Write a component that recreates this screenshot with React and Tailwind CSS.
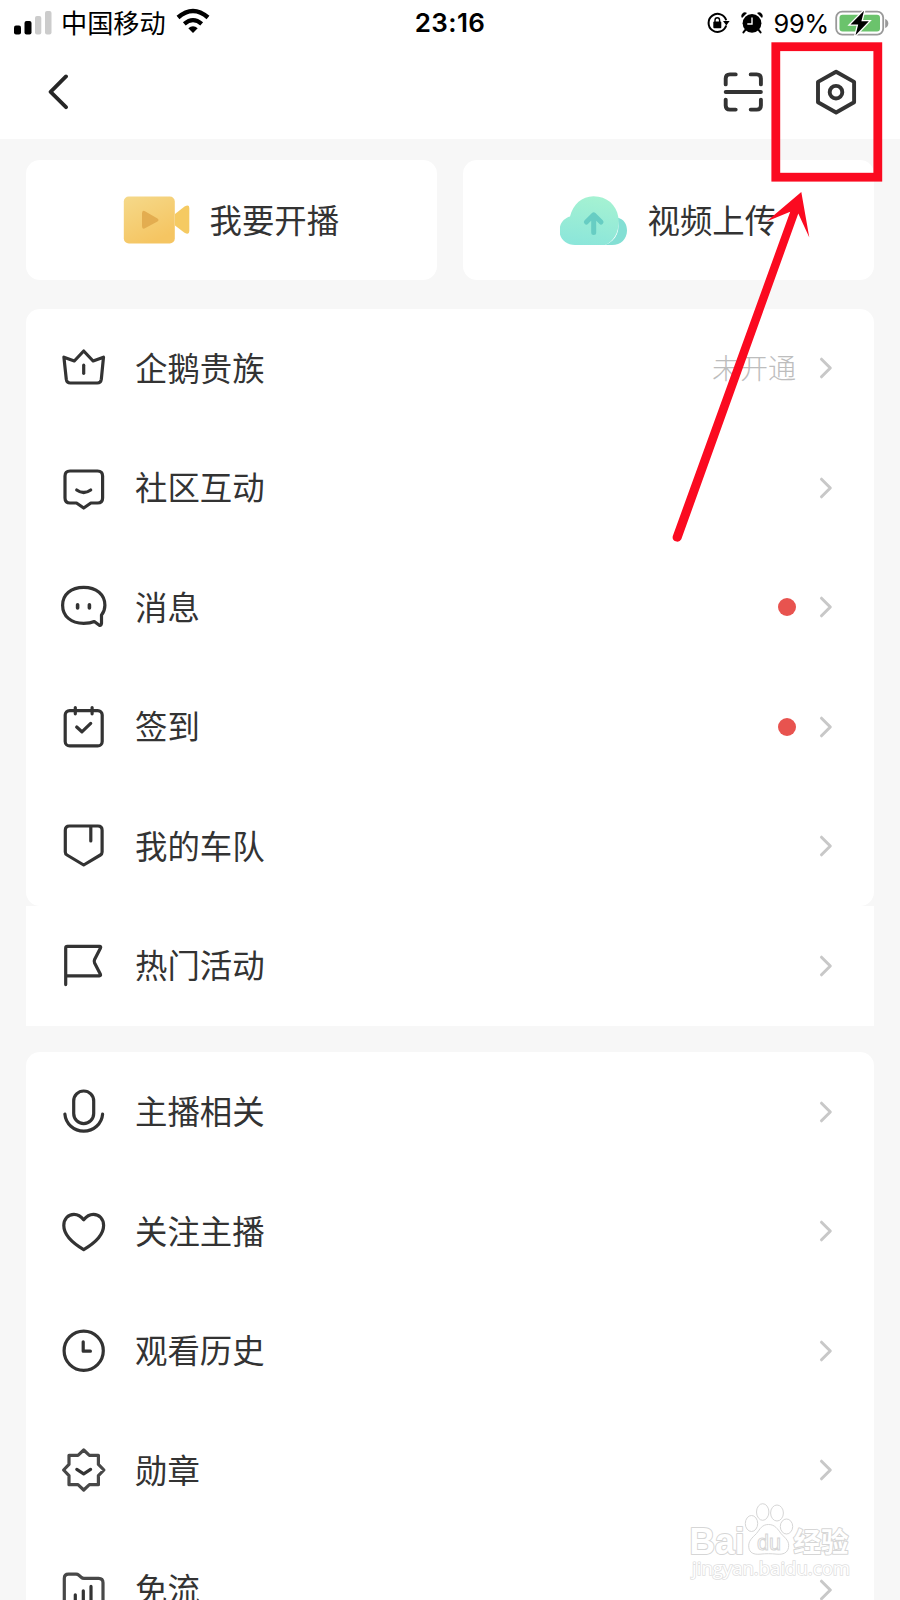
import React from "react";

const Icon = ({ children }) => (
  <svg
    className="w-12 h-12 shrink-0"
    viewBox="0 0 48 48"
    fill="none"
    stroke="#333333"
    strokeWidth="3.2"
    strokeLinecap="round"
    strokeLinejoin="round"
  >
    {children}
  </svg>
);

const icons = {
  crown: (
    <Icon>
      <path d="M3.9 13.2L14.3 17L23.7 7L33.1 17L43.5 13.2L41.3 35.4Q40.8 39 37.3 39H10.3Q6.8 39 6.3 35.4Z" />
      <path d="M23.7 21.2V29.3" />
    </Icon>
  ),
  community: (
    <Icon>
      <path d="M10 7H37.5Q42.6 7 42.6 12V34Q42.6 39 37.5 39H30.9L23.7 44L16.5 39H10Q5 39 5 34V12Q5 7 10 7Z" />
      <path d="M16.7 26Q23.7 31 30.7 26" />
    </Icon>
  ),
  message: (
    <Icon>
      <path d="M34.3 38.5C31 40 28 40.3 23.7 40.3C11 40.3 2.6 33.2 2.6 22.2C2.6 11.5 11 4.3 23.7 4.3C36.4 4.3 44.9 11.5 44.9 22.2C44.9 26 43.6 29.4 41.5 32V40.5Q41.3 43.2 39 42Z" />
      <path d="M17.6 21.8V25M29.4 21.8V25" strokeWidth="3.6" />
    </Icon>
  ),
  checkin: (
    <Icon>
      <rect x="5.2" y="7.6" width="37" height="35.3" rx="4.5" />
      <path d="M15.3 4.6V10.8M32.1 4.6V10.8M16.7 24L21.9 28.8L30.7 20.4" />
    </Icon>
  ),
  team: (
    <Icon>
      <path d="M9.5 4H37.9Q42.1 4 42.1 8.2V30Q42.1 32 40.4 33L23.7 43L7 33Q5.3 32 5.3 30V8.2Q5.3 4 9.5 4Z" />
      <path d="M30.8 4.5V19" />
    </Icon>
  ),
  flag: (
    <Icon>
      <path d="M5.7 42.6V6Q5.7 4.4 7.3 4.4H39.6Q41.2 4.4 40.5 5.9L34.6 17.4Q33.8 19.2 34.6 21L40.4 32.2Q41 33.8 39.4 33.8H5.7" />
    </Icon>
  ),
  mic: (
    <Icon>
      <rect x="13.7" y="3" width="20" height="32.6" rx="10" />
      <path d="M4.9 26.2A18.9 18.3 0 0 0 42.6 26.2" />
    </Icon>
  ),
  heart: (
    <Icon>
      <path d="M23.7 12.8C20.5 8.6 16.8 7.3 14 7.3C8 7.3 3.8 12 3.8 18.6C3.8 27.5 11.5 35.5 23.7 42.7C35.9 35.5 43.6 27.5 43.6 18.6C43.6 12 39.4 7.3 33.4 7.3C30.6 7.3 26.9 8.6 23.7 12.8Z" />
    </Icon>
  ),
  history: (
    <Icon>
      <circle cx="23.7" cy="23.8" r="19.6" />
      <path d="M23.2 14.8V24.2H30.4" />
    </Icon>
  ),
  medal: (
    <Icon>
      <path
        d="M23.7 4L29.4 9.3H38.4V18.4L43.9 24L38.4 29.6V38.7H29.4L23.7 44L18 38.7H9V29.6L3.6 24L9 18.4V9.3H18Z"
        stroke="#484848"
      />
      <path d="M16.8 23.4L23.7 27.8L30.6 23.4" />
    </Icon>
  ),
  flow: (
    <Icon>
      <path
        d="M8.5 8.2H16.2Q17.6 8.2 18.6 9L21.2 11.2Q22.4 12.3 24 12.3H38.6Q43 12.3 43 16.7V39Q43 43 38.6 43H8.5Q4.3 43 4.3 39V12.4Q4.3 8.2 8.5 8.2Z"
        stroke="#484848"
      />
      <path d="M15.3 28.8V37M23.3 24.8V37M31 20.4V37" />
    </Icon>
  ),
};

const mainItems = [
  { label: "企鹅贵族", icon: "crown", note: "未开通" },
  { label: "社区互动", icon: "community" },
  { label: "消息", icon: "message", dot: true },
  { label: "签到", icon: "checkin", dot: true },
  { label: "我的车队", icon: "team" },
];

const hotItems = [{ label: "热门活动", icon: "flag" }];

const moreItems = [
  { label: "主播相关", icon: "mic" },
  { label: "关注主播", icon: "heart" },
  { label: "观看历史", icon: "history" },
  { label: "勋章", icon: "medal" },
  { label: "免流", icon: "flow" },
];

const Row = ({ item }) => (
  <div className="flex items-center h-[119.5px] pl-[34px] pr-[40px]">
    {icons[item.icon]}
    <span className="ml-[27px] pb-[3px] text-[32.4px] leading-none text-[#333333]">{item.label}</span>
    <div className="ml-auto flex items-center">
      {item.note && (
        <span className="pb-[2px] text-[28px] leading-none font-light text-[#bdbdbd]">{item.note}</span>
      )}
      {item.dot && <span className="w-[18px] h-[18px] rounded-full bg-[#e8534f]" />}
      <svg
        className="w-5 h-6 ml-[18px]"
        viewBox="0 0 20 24"
        fill="none"
        stroke="#c8c8c8"
        strokeWidth="3"
        strokeLinecap="round"
        strokeLinejoin="round"
      >
        <path d="M7.5 3.2L16.3 12L7.5 20.8" />
      </svg>
    </div>
  </div>
);

const StatusBar = () => (
  <div className="grid grid-cols-3 items-center h-[46px] pl-[14px] pr-[11px] text-black">
    <div className="flex items-center">
      <svg className="w-[38px] h-6" viewBox="0 0 38 24">
        <rect x="0" y="14.5" width="7" height="9" rx="2" />
        <rect x="10.5" y="10" width="7" height="13.5" rx="2" />
        <rect x="21" y="5" width="6.3" height="18.5" rx="2" fill="#cccccc" />
        <rect x="31" y="0" width="6.5" height="23.5" rx="2" fill="#cccccc" />
      </svg>
      <span className="ml-[9px] pb-[2px] text-[26.2px] leading-none whitespace-nowrap">中国移动</span>
      <svg className="w-[34px] h-[26px] ml-[10px] -mt-[3px]" viewBox="0 0 34 26">
        <path d="M17 25L12.3 20.2Q17 16.3 21.7 20.2Z" />
        <path d="M8.3 15.9Q17 8.3 25.7 15.9" fill="none" stroke="black" strokeWidth="4.2" />
        <path d="M2 9.5Q17 -3.6 32 9.5" fill="none" stroke="black" strokeWidth="4.4" />
      </svg>
    </div>
    <div className="pr-[3px] text-center font-['Inter',sans-serif] font-semibold text-[26px] leading-none tracking-[0.4px]">
      23:16
    </div>
    <div className="flex items-center justify-end">
      <svg className="w-[23px] h-[22px]" viewBox="0 0 23 22" fill="none">
        <path d="M19.2 13.5A9 9 0 1 1 19.2 8.3" stroke="black" strokeWidth="2" />
        <path d="M16 9H22.6L19.4 13.6Z" fill="black" />
        <rect x="6.3" y="9.6" width="8" height="6.7" rx="1" fill="black" />
        <path d="M8 10V8.2Q8 5.8 10.3 5.8Q12.6 5.8 12.6 8.2V10" stroke="black" strokeWidth="1.4" />
      </svg>
      <svg className="w-[22px] h-[22px] ml-[11px]" viewBox="0 0 22 22" fill="none">
        <circle cx="11" cy="11.3" r="9.4" fill="black" />
        <path d="M1 6A3.6 3.6 0 0 1 6 1ZM21 6A3.6 3.6 0 0 0 16 1Z" fill="black" />
        <path d="M4.6 17.6L2.4 20.4M17.4 17.6L19.6 20.4" stroke="black" strokeWidth="2" strokeLinecap="round" />
        <path d="M11 5.6V12H6.3" stroke="white" strokeWidth="1.4" />
      </svg>
      <span className="ml-[10px] pt-px font-['Inter',sans-serif] text-[25.4px] leading-none tracking-[-0.3px]">99%</span>
      <svg className="w-[54px] h-[26px] ml-[6px] -mt-px" viewBox="0 0 54 26">
        <rect x="1.2" y="1.6" width="47" height="23" rx="6" fill="none" stroke="#999999" strokeWidth="1.8" />
        <rect x="4.5" y="4.8" width="40.5" height="16.6" rx="3" fill="#6bc36c" />
        <path d="M50.2 9V18Q53.3 16.7 53.3 13.5Q53.3 10.3 50.2 9Z" fill="#999999" />
        <path
          d="M29 0.8L15.5 14.5H23.2L20.5 25.2L33.8 11.3H26.4Z"
          stroke="white"
          strokeWidth="2.6"
          paintOrder="stroke"
        />
      </svg>
    </div>
  </div>
);

const NavBar = () => (
  <div className="flex items-center h-[93px] pl-[46px] pr-[41px]">
    <svg
      className="w-6 h-9 mb-[2px]"
      viewBox="0 0 24 36"
      fill="none"
      stroke="#262626"
      strokeWidth="3.8"
      strokeLinecap="round"
      strokeLinejoin="round"
    >
      <path d="M20 2.4L4.6 17.8L20 33.2" />
    </svg>
    <svg
      className="w-10 h-10 ml-auto mb-[2px]"
      viewBox="0 0 40 40"
      fill="none"
      stroke="#333333"
      strokeWidth="3.9"
      strokeLinecap="round"
    >
      <path d="M2.7 12.4V6.6Q2.7 2.4 6.9 2.4H12.7M27.7 2.4H33.7Q37.9 2.4 37.9 6.6V12.4M2.7 27.6V33.4Q2.7 37.6 6.9 37.6H12.7M27.7 37.6H33.7Q37.9 37.6 37.9 33.4V27.6M2.7 20H37.9" />
    </svg>
    <svg
      className="w-[46px] h-[46px] ml-[50px] mb-[2px]"
      viewBox="0 0 46 46"
      fill="none"
      stroke="#333333"
      strokeWidth="3.9"
      strokeLinejoin="round"
    >
      <path d="M23.1 2.7L41.1 12.9V33.2L23.1 43.5L5 33.2V12.9Z" />
      <circle cx="23" cy="23.2" r="6.3" />
    </svg>
  </div>
);

const LiveIcon = () => (
  <svg className="w-[67px] h-[48px]" viewBox="0 0 67 48">
    <defs>
      <linearGradient id="live" x1="0" y1="0" x2="0.5" y2="1">
        <stop offset="0" stopColor="#f5d98a" />
        <stop offset="1" stopColor="#f5c562" />
      </linearGradient>
    </defs>
    <path d="M52 18L61.5 10.6Q66.3 8 66.3 12V35Q66.3 39.4 61.5 36.7L52 29.4Z" fill="#f5ca62" />
    <rect x="0.8" y="0.5" width="51" height="47" rx="5" fill="url(#live)" />
    <path d="M19 17.5Q19 13.5 22.4 15.5L34.5 22.5Q36.5 24 34.5 25.5L22.4 32Q19 34 19 30Z" fill="#e3ad50" />
  </svg>
);

const UploadIcon = () => (
  <svg className="w-[68px] h-[49px]" viewBox="0 0 68 49">
    <defs>
      <linearGradient id="cloud" x1="0.6" y1="0" x2="0.4" y2="1">
        <stop offset="0" stopColor="#a5f2d2" />
        <stop offset="1" stopColor="#8ce6da" />
      </linearGradient>
    </defs>
    <path d="M45 49C57 45 61 33 57 21.6C64 23 67 28.5 67 34.5C67 43 61 49 52 49Z" fill="#83dfd4" />
    <path
      d="M15 49C6 49 -0.5 43 -0.5 34.7C-0.5 27.5 4 22.2 10 20.6C13 8.5 22 0.3 33.5 0.3C47 0.3 56.5 9 58.3 21C60 34 55 45 45 49Z"
      fill="url(#cloud)"
    />
    <path
      d="M33.7 36.5V19.5M26.4 26L33.7 18.8L41 26"
      fill="none"
      stroke="#67cdc3"
      strokeWidth="5"
      strokeLinecap="round"
      strokeLinejoin="round"
    />
  </svg>
);

const ActionCard = ({ icon, label }) => (
  <div className="flex items-center h-[120px] pl-[97px] rounded-[14px] bg-white">
    {icon}
    <span className="ml-[19.5px] pb-[2px] text-[32.4px] leading-none text-[#333333] whitespace-nowrap">{label}</span>
  </div>
);

// red marker box and arrow on top of the settings button
const Callout = () => (
  <svg className="absolute left-[660px] top-[40px] w-[240px] h-[510px]" viewBox="660 40 240 510">
    <rect x="775.8" y="46.7" width="102" height="130.5" fill="none" stroke="#fb0a20" strokeWidth="8.8" />
    <path
      d="M801.3 192L809.3 237.5L798.3 213.5L681.3 539.3A4.6 4.6 0 0 1 672.8 536L790.2 211.8L766.5 221.5Z"
      fill="#fb0a20"
    />
  </svg>
);

const Watermark = () => (
  <svg
    className="absolute left-[680px] top-[1495px] w-[180px] h-[90px]"
    viewBox="680 1495 180 90"
    fill="white"
    stroke="#d6d6d6"
    strokeWidth="1"
  >
    <g strokeWidth="2" paintOrder="stroke" strokeLinejoin="round">
      <text
        x="689.5"
        y="1553.5"
        className="font-['Liberation_Sans',sans-serif] font-bold text-[37px]"
        textLength="55"
        lengthAdjust="spacingAndGlyphs"
      >
        Bai
      </text>
      <text x="793.5" y="1551.5" className="font-bold text-[27.5px]">经验</text>
    </g>
    <path d="M768.5 1524.5C775 1524.5 777.5 1529 781 1533.5C786 1539 789.5 1541 788.5 1547.5C787.5 1553 783 1554.7 777 1554.2C771 1553.5 766 1553.5 760 1554.2C754 1554.7 749.5 1553 748.8 1547.5C748 1541 752 1538 756.5 1533.5C760 1529 762 1524.5 768.5 1524.5Z" />
    <ellipse cx="751.5" cy="1523.5" rx="6.2" ry="8" />
    <ellipse cx="762.7" cy="1512" rx="6.2" ry="8.3" />
    <ellipse cx="777" cy="1513" rx="6.4" ry="8" />
    <ellipse cx="786.5" cy="1526.5" rx="6.2" ry="7.5" />
    <text
      x="757"
      y="1550"
      className="font-['Liberation_Sans',sans-serif] text-[22px]"
      textLength="24"
      lengthAdjust="spacingAndGlyphs"
    >
      du
    </text>
    <text
      x="692"
      y="1574.5"
      className="font-['Open_Sans',sans-serif] text-[19px]"
      textLength="158"
      lengthAdjust="spacingAndGlyphs"
      strokeWidth="1.6"
      paintOrder="stroke"
      stroke="#e0e0e0"
    >
      jingyan.baidu.com
    </text>
  </svg>
);

const App = () => {
  return (
    <div className="relative w-[900px] h-[1600px] overflow-hidden bg-[#f7f7f7] font-['Noto_Sans_CJK_SC',sans-serif]">
      <header className="bg-white">
        <StatusBar />
        <NavBar />
      </header>

      <main className="px-[26px] pt-[21px]">
        <div className="grid grid-cols-2 gap-[26px]">
          <ActionCard icon={<LiveIcon />} label="我要开播" />
          <ActionCard icon={<UploadIcon />} label="视频上传" />
        </div>

        <section className="mt-[28.5px]">
          <div className="rounded-[14px] bg-white">
            {mainItems.map((item) => <Row key={item.label} item={item} />)}
          </div>
          <div className="bg-white">
            {hotItems.map((item) => <Row key={item.label} item={item} />)}
          </div>
        </section>

        <section className="mt-[26.5px] rounded-t-[14px] bg-white">
          {moreItems.map((item) => <Row key={item.label} item={item} />)}
        </section>
      </main>

      <Callout />
      <Watermark />
    </div>
  );
};

export default App;
